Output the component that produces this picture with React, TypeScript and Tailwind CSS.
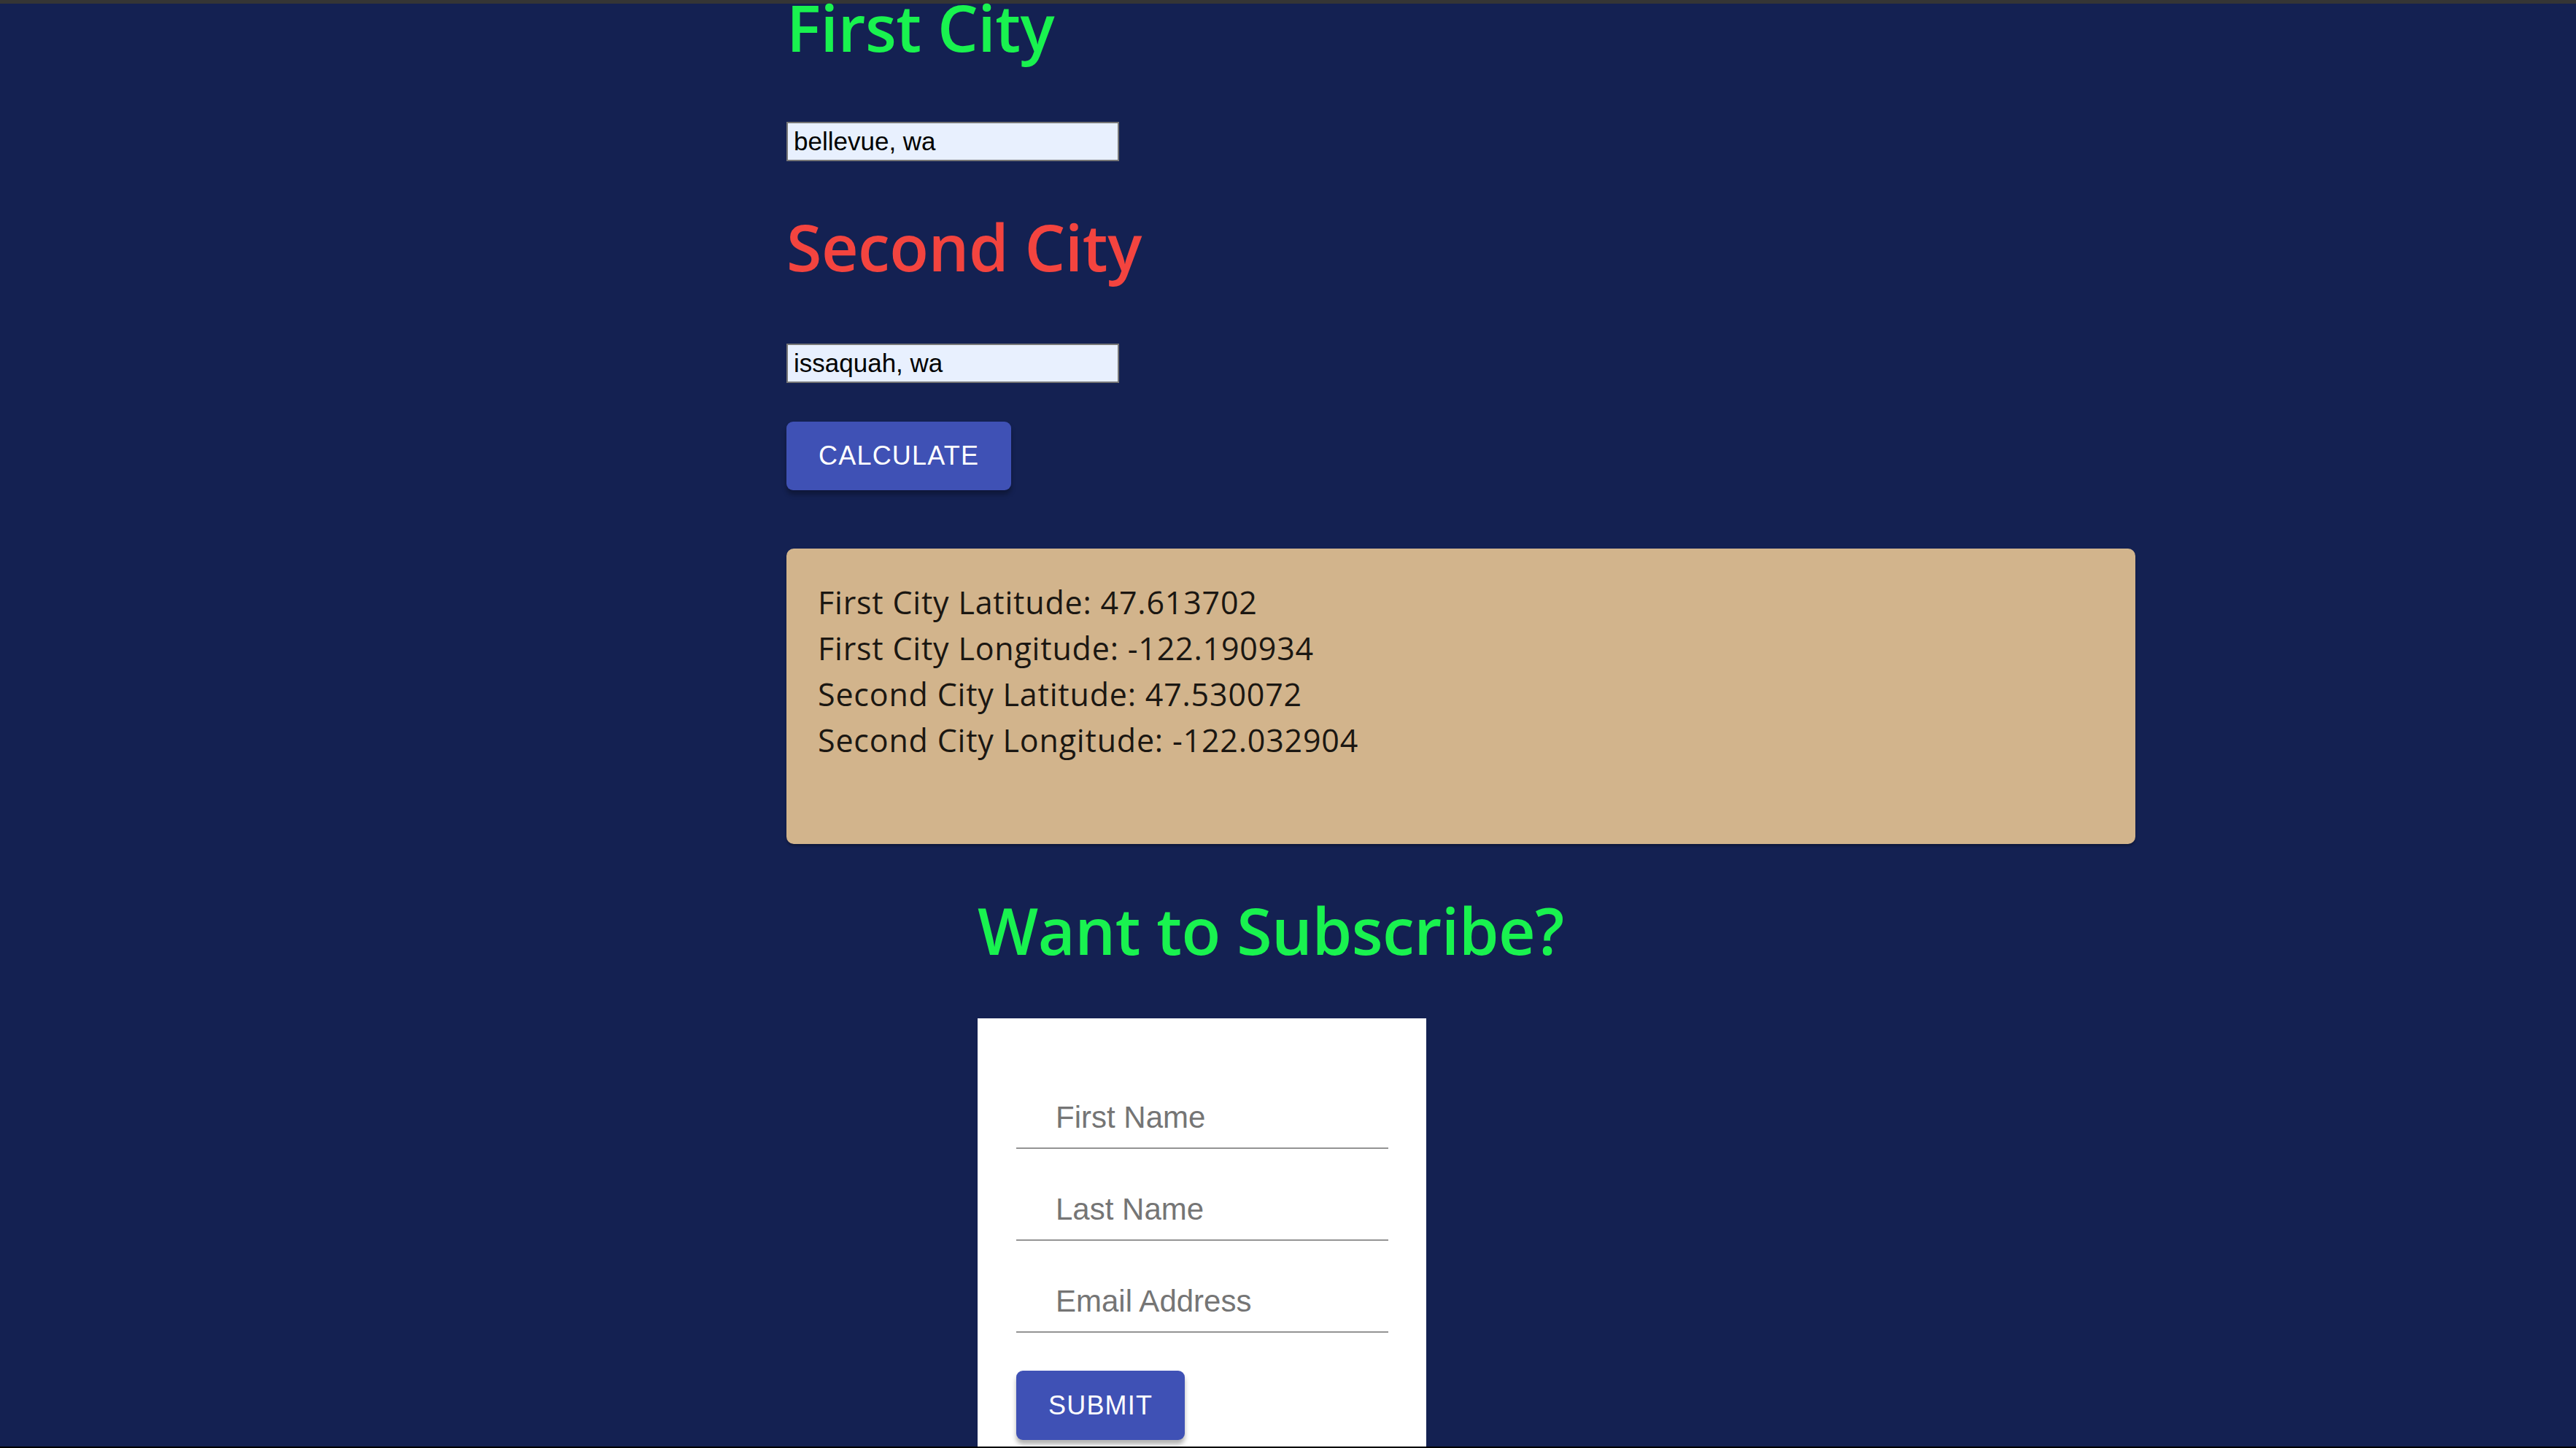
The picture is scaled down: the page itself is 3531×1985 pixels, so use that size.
import React from "react";

const heading = "font-['Open_Sans',sans-serif] font-semibold text-[88px] leading-[88px] tracking-[-0.5px]";
const arial = "font-['Liberation_Sans',Arial,sans-serif]";

function CityInput({ value, className }: { value: string; className?: string }) {
  return (
    <input
      defaultValue={value}
      className={`${arial} ${className ?? ""} w-[456px] h-[54px] bg-[#e8f0fe] border-2 border-[#767676] px-[8px] text-[35px] text-black outline-none`}
    />
  );
}

function Field({ label, className }: { label: string; className?: string }) {
  return (
    <div className={`${className ?? ""} w-[510px] border-b-2 border-[#949494] pb-[17px]`}>
      <input
        placeholder={label}
        className={`${arial} w-full pl-[54px] text-[42px] leading-[48px] h-[48px] text-black placeholder:text-[#757575] outline-none bg-transparent`}
      />
    </div>
  );
}

export default function App() {
  const lines = [
    "First City Latitude: 47.613702",
    "First City Longitude: -122.190934",
    "Second City Latitude: 47.530072",
    "Second City Longitude: -122.032904",
  ];
  return (
    <div className="min-h-screen bg-[#142152] overflow-hidden">
      <div className="h-[5px] bg-[#353535]" />
      <div className="pl-[1078px] flex flex-col items-start">
        <h1 className={`${heading} text-[#19f24f] -mt-[12px] relative`}>First City</h1>
        <CityInput value="bellevue, wa" className="mt-[86px]" />
        <h2 className={`${heading} text-[#f3443f] mt-[73px]`}>Second City</h2>
        <CityInput value="issaquah, wa" className="mt-[89px]" />
        <button
          className={`${arial} mt-[53px] h-[94px] px-[44px] rounded-[9px] bg-[#3f51b5] text-white text-[36px] tracking-[1.2px] shadow-[0_6px_6px_rgba(0,0,0,0.3)]`}
        >
          CALCULATE
        </button>
        <div className="mt-[80px] w-[1849px] h-[405px] rounded-[10px] bg-[#d2b48c] shadow-[0_3px_3px_rgba(0,0,0,0.25)] pl-[43px] pt-[42px] font-['Open_Sans',sans-serif] text-[43px] tracking-[0.8px] leading-[63px] text-[#1b1712]">
          {lines.map((l) => (
            <div key={l}>{l}</div>
          ))}
        </div>
        <div className="ml-[262px] mt-[74px] flex flex-col items-start">
          <h2 className={`${heading} text-[#19f24f]`}>Want to Subscribe?</h2>
          <div className="mt-[77px] w-[615px] bg-white pl-[53px] pt-[112px] pb-[60px] flex flex-col items-start">
            <Field label="First Name" />
            <Field label="Last Name" className="mt-[59px]" />
            <Field label="Email Address" className="mt-[59px]" />
            <button
              className={`${arial} mt-[52px] h-[95px] px-[44px] rounded-[9px] bg-[#3f51b5] text-white text-[36px] tracking-[1.2px] shadow-[0_6px_6px_rgba(0,0,0,0.3)]`}
            >
              SUBMIT
            </button>
          </div>
        </div>
      </div>
      <div className="fixed bottom-0 left-0 right-0 h-[2px] bg-black" />
    </div>
  );
}
